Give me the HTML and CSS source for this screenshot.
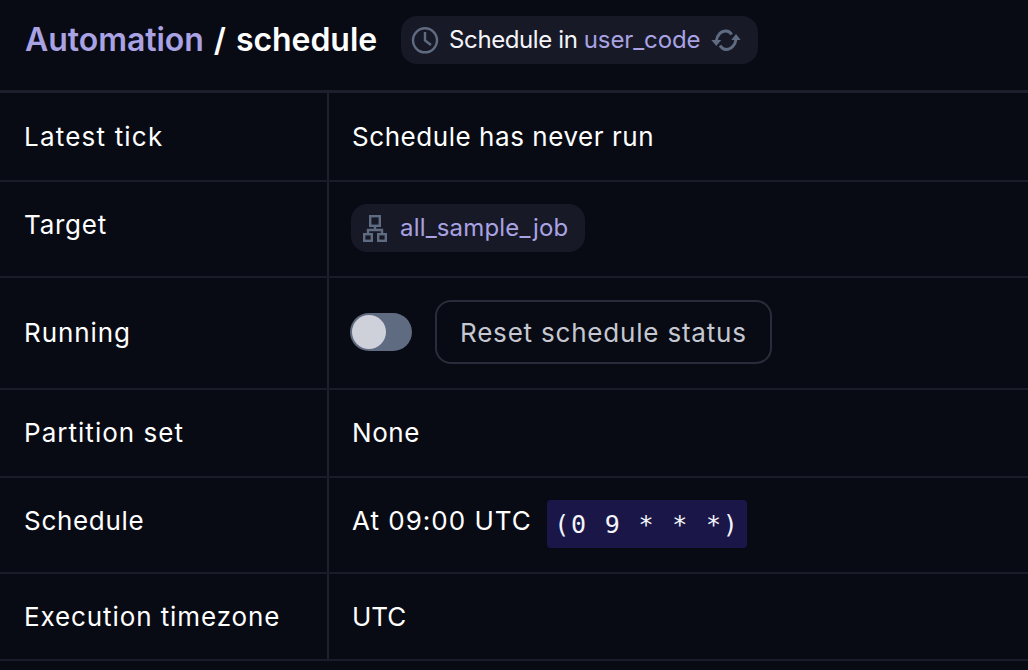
FILE: index.html
```html
<!DOCTYPE html>
<html lang="en">
<head>
<meta charset="utf-8">
<title>Automation / schedule</title>
<link rel="stylesheet" href="styles.css">
</head>
<body>
<header class="header">
  <h1 class="title"><span class="crumb">Automation</span> / schedule</h1>
  <div class="tag">
    <svg class="tag-icon" viewBox="0 0 28 28"><circle cx="14" cy="14.300" r="12" fill="none" stroke="#5f6b80" stroke-width="2.400"/><path d="M14 6V14.500L20 19" fill="none" stroke="#5f6b80" stroke-width="2.400"/></svg>
    <span class="tag-text">Schedule in <span class="link tag-link">user_code</span></span>
    <svg class="reload-icon" viewBox="0 0 30 24"><path d="M5.300 13C6 7 10 3 15 3C17.500 3 19.500 4.500 20.700 6.500M25 11C24.500 17 20 21.500 15 21.500C12.500 21.500 10.500 20 9 17.500" fill="none" stroke="#5f6b80" stroke-width="3"/><path d="M.3 12H10.300L5.300 18ZM20.300 12H29.700L25 6Z" fill="#5f6b80"/></svg>
  </div>
</header>
<main class="table">
  <div class="row row-tick">
    <div class="key">Latest tick</div>
    <div class="val">Schedule has never run</div>
  </div>
  <div class="row row-target">
    <div class="key">Target</div>
    <div class="val">
      <div class="job-tag">
        <svg class="job-icon" viewBox="0 0 24 27" fill="none" stroke="#5f6b80" stroke-width="2.400"><rect x="7.200" y="1.200" width="9.600" height="9.600"/><rect x="1.200" y="19.200" width="7.600" height="6.600"/><rect x="15.200" y="19.200" width="7.600" height="6.600"/><path d="M12 12v3.500M5 18v-3h14v3"/></svg>
        <span class="link job-name">all_sample_job</span>
      </div>
    </div>
  </div>
  <div class="row row-running">
    <div class="key">Running</div>
    <div class="val val-inline">
      <div class="toggle"><div class="knob"></div></div>
      <button class="reset" type="button">Reset schedule status</button>
    </div>
  </div>
  <div class="row row-partition">
    <div class="key">Partition set</div>
    <div class="val">None</div>
  </div>
  <div class="row row-schedule">
    <div class="key">Schedule</div>
    <div class="val val-cron">
      <span class="time">At 09:00 UTC</span>
      <code class="cron">(0 9 * * *)</code>
    </div>
  </div>
  <div class="row row-tz">
    <div class="key">Execution timezone</div>
    <div class="val val-tz">UTC</div>
  </div>
</main>
</body>
</html>
```
FILE: styles.css
```css
* { box-sizing: border-box; }
html, body { margin: 0; height: 100%; }
body {
  background: #090b14;
  color: #fff;
  font-family: Inter, "Liberation Sans", sans-serif;
  font-size: 26px;
  font-weight: 375;
  overflow: hidden;
}
.header {
  height: 93px;
  border-bottom: 3px solid #1e1f2c;
  display: flex;
  align-items: center;
  padding: 0 0 11px 25px;
  gap: 24px;
}
.title {
  margin: 0;
  font-size: 32px;
  font-weight: 600;
  line-height: 40px;
  letter-spacing: -.05px;
  word-spacing: 2px;
  color: #fff;
}
.crumb { color: #a9a2e3; }
.link { color: #a9a2e3; }
.tag {
  height: 48px;
  background: #171926;
  border-radius: 16px;
  display: flex;
  align-items: center;
  padding: 0 17px 0 10px;
  gap: 10px;
  font-size: 24px;
  color: #f4f4fa;
}
.tag-text { letter-spacing: -.4px; }
.tag-link { letter-spacing: -.1px; }
.tag-icon { width: 28px; height: 28px; }
.reload-icon { width: 30px; height: 24px; }
.row {
  display: grid;
  grid-template-columns: 329px 1fr;
  border-bottom: 2px solid #1b1c29;
}
.key {
  padding: 26px 0 0 24px;
  border-right: 2px solid #1f202e;
  line-height: 36px;
  letter-spacing: .9px;
}
.val {
  padding: 26px 0 0 23px;
  line-height: 36px;
  letter-spacing: .55px;
}
.row-tick { height: 89px; }
.row-target { height: 96px; }
.row-running { height: 112px; }
.row-partition { height: 88px; }
.row-schedule { height: 96px; }
.row-tz { height: 87px; }
.row-tick .key { letter-spacing: 1.2px; }
.row-target .key { padding-top: 25px; letter-spacing: .75px; }
.row-target .val { padding-top: 22px; }
.job-tag {
  display: inline-flex;
  align-items: center;
  height: 48px;
  margin-left: -1px;
  padding: 0 17px 0 12px;
  gap: 13px;
  background: #171926;
  border-radius: 16px;
  font-size: 24px;
}
.job-name { letter-spacing: .18px; }
.job-icon { width: 24px; height: 27px; }
.row-running .key { padding-top: 37px; }
.val-inline {
  display: flex;
  align-items: center;
  gap: 23px;
  padding-top: 0;
  padding-bottom: 2px;
}
.toggle {
  margin-left: -2px;
  width: 62px;
  height: 38px;
  background: #5f6b80;
  border-radius: 19px;
  padding: 2px;
}
.knob {
  width: 34px;
  height: 34px;
  border-radius: 50%;
  background: #cfd1da;
}
.reset {
  height: 64px;
  padding: 1px 23px 0;
  background: transparent;
  border: 2px solid #2a2c3b;
  border-radius: 16px;
  font: inherit;
  letter-spacing: .8px;
  color: #c5c7d1;
}
.row-partition .key, .row-partition .val { padding-top: 25px; }
.row-partition .key { letter-spacing: 1.03px; }
.row-schedule .key, .row-schedule .val { padding-top: 25px; }
.row-schedule .key { letter-spacing: .7px; }
.row-tz .key, .row-tz .val { padding-top: 25px; }
.val-tz { letter-spacing: 0; }
.val-cron {
  display: flex;
  align-items: flex-start;
  gap: 15px;
}
.time { letter-spacing: 1px; }
.cron {
  margin-top: -3px;
  height: 48px;
  padding: 1px 7.5px 0;
  background: #1a1748;
  border-radius: 4px;
  font-family: "DejaVu Sans Mono", monospace;
  font-size: 25px;
  line-height: 48px;
  letter-spacing: 1.8px;
  color: #f4f4fa;
}
```
